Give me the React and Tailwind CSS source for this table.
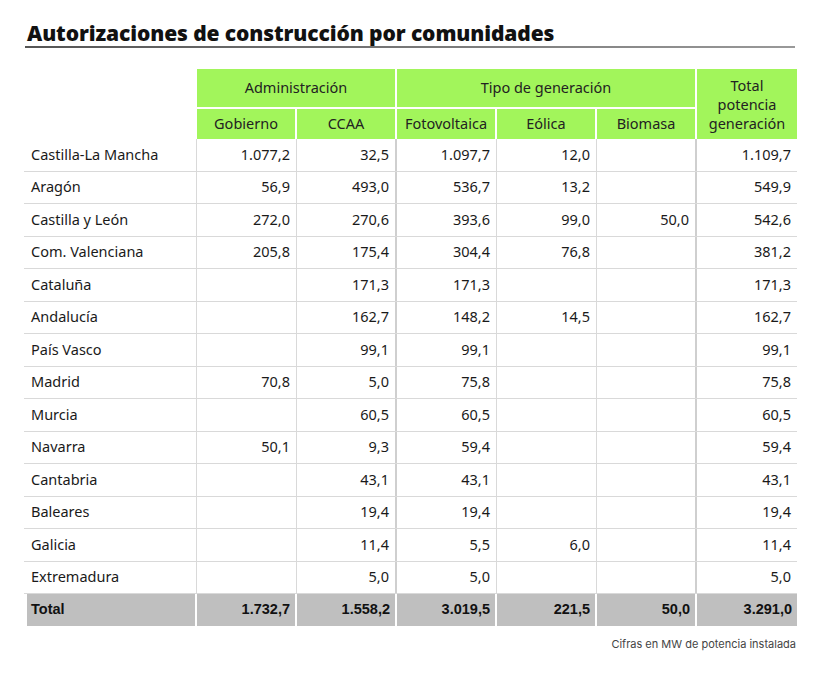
import React from "react";

const rows = [
  ["Castilla-La Mancha", "1.077,2", "32,5", "1.097,7", "12,0", "", "1.109,7"],
  ["Aragón", "56,9", "493,0", "536,7", "13,2", "", "549,9"],
  ["Castilla y León", "272,0", "270,6", "393,6", "99,0", "50,0", "542,6"],
  ["Com. Valenciana", "205,8", "175,4", "304,4", "76,8", "", "381,2"],
  ["Cataluña", "", "171,3", "171,3", "", "", "171,3"],
  ["Andalucía", "", "162,7", "148,2", "14,5", "", "162,7"],
  ["País Vasco", "", "99,1", "99,1", "", "", "99,1"],
  ["Madrid", "70,8", "5,0", "75,8", "", "", "75,8"],
  ["Murcia", "", "60,5", "60,5", "", "", "60,5"],
  ["Navarra", "50,1", "9,3", "59,4", "", "", "59,4"],
  ["Cantabria", "", "43,1", "43,1", "", "", "43,1"],
  ["Baleares", "", "19,4", "19,4", "", "", "19,4"],
  ["Galicia", "", "11,4", "5,5", "6,0", "", "11,4"],
  ["Extremadura", "", "5,0", "5,0", "", "", "5,0"],
];
const totals = ["Total", "1.732,7", "1.558,2", "3.019,5", "221,5", "50,0", "3.291,0"];

const font = { fontFamily: "'Noto Sans', 'Open Sans', sans-serif" };

export default function App() {
  return (
    <div className="w-[824px] h-[692px] bg-white relative" style={font}>
      <div className="pt-[19px] pl-[27px]">
        <h1
          className="text-[21px] leading-[28px] font-extrabold text-[#111] tracking-[-0.1px]"
          style={{ fontFamily: "'Open Sans', 'Noto Sans', sans-serif" }}
        >
          Autorizaciones de construcción por comunidades
        </h1>
      </div>
      <div className="ml-[25px] w-[770px] h-[2px] bg-gradient-to-r from-[#555] via-[#777] to-[#999] mt-[-1px]" />

      <div className="ml-[27px] mt-[21px] w-[770px] grid grid-cols-[170px_100px_100px_100px_100px_100px_100px] grid-rows-[40px_30px] text-[14.5px] text-[#222]">
        <div className="row-span-2" />
        <div className="col-span-2 bg-[#a2f55b] border-r-2 border-b-2 border-white flex items-center justify-center pb-[1px]">Administración</div>
        <div className="col-span-3 bg-[#a2f55b] border-r-2 border-b-2 border-white flex items-center justify-center pb-[1px]">Tipo de generación</div>
        <div className="row-span-2 bg-[#a2f55b] flex items-center justify-center text-center leading-[19px] pt-[1px]">
          Total<br />potencia<br />generación
        </div>
        <div className="bg-[#a2f55b] border-r-2 border-white flex items-center justify-center">Gobierno</div>
        <div className="bg-[#a2f55b] border-r-2 border-white flex items-center justify-center">CCAA</div>
        <div className="bg-[#a2f55b] border-r-2 border-white flex items-center justify-center">Fotovoltaica</div>
        <div className="bg-[#a2f55b] border-r-2 border-white flex items-center justify-center">Eólica</div>
        <div className="bg-[#a2f55b] border-r-2 border-white flex items-center justify-center">Biomasa</div>
      </div>

      <div className="ml-[24px] w-[773px] text-[14.5px] text-[#1a1a1a]">
        {rows.map((r, i) => (
          <div key={i} className="flex h-[32.5px] border-b border-[#d9d9d9]">
            <div className="w-[173px] pl-[7px] flex items-center border-r border-[#d9d9d9]">{r[0]}</div>
            {r.slice(1).map((v, j) => (
              <div
                key={j}
                className={
                  "w-[100px] flex items-center justify-end pr-[6px] " +
                  (j === 5 ? "" : j === 1 || j === 4 ? "border-r-2 border-[#cfcfcf]" : "border-r border-[#d9d9d9]")
                }
              >
                {v}
              </div>
            ))}
          </div>
        ))}
      </div>

      <div
        className="ml-[27px] w-[770px] flex h-[32px] text-[14.5px] font-bold text-[#111]"
        style={{ fontFamily: "'Liberation Sans', Arial, sans-serif" }}
      >
        <div className="w-[170px] pl-[4px] flex items-center bg-[#bfbfbf] border-r-2 border-white">{totals[0]}</div>
        {totals.slice(1).map((v, j) => (
          <div
            key={j}
            className={"w-[100px] flex items-center justify-end pr-[5px] bg-[#bfbfbf] " + (j === 5 ? "" : "border-r-2 border-white")}
          >
            {v}
          </div>
        ))}
      </div>

      <div className="w-[796px] text-right mt-[10px] text-[11px] text-[#444]" style={{ fontFamily: "Inter, 'Noto Sans', sans-serif" }}>
        Cifras en MW de potencia instalada
      </div>
    </div>
  );
}
